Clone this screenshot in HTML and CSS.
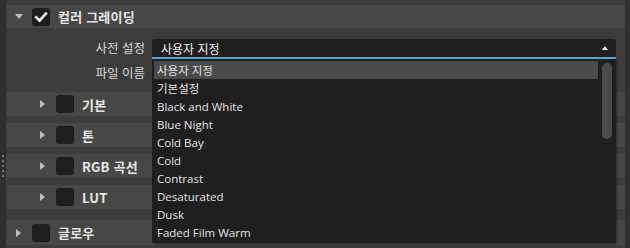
FILE: index.html
```html
<!DOCTYPE html>
<html lang="ko">
<head>
<meta charset="utf-8">
<link rel="stylesheet" href="styles.css">
</head>
<body>
<div class="app">
  <div class="gutter left">
    <div class="grip"><i></i><i></i><i></i><i></i><i></i></div>
  </div>
  <div class="panel">
    <div class="row header">
      <span class="tri down"></span>
      <span class="cb"><svg viewBox="0 0 18 18" width="18" height="18"><path d="M4.2 9.3 L7.6 12.6 L13.9 5.6" fill="none" stroke="#f2f2f2" stroke-width="2.6" stroke-linecap="square"/></svg></span>
      <span class="title">컬러 그레이딩</span>
    </div>
    <div class="presets">
      <div class="field">
        <span class="label">사전 설정</span>
        <div class="select">
          <div class="select-box"><span>사용자 지정</span><span class="up"></span></div>
          <div class="menu">
            <div class="list">
              <div class="item active">사용자 지정</div>
              <div class="item">기본설정</div>
              <div class="item">Black and White</div>
              <div class="item">Blue Night</div>
              <div class="item">Cold Bay</div>
              <div class="item">Cold</div>
              <div class="item">Contrast</div>
              <div class="item">Desaturated</div>
              <div class="item">Dusk</div>
              <div class="item">Faded Film Warm</div>
            </div>
            <div class="track"><div class="thumb"></div></div>
          </div>
        </div>
      </div>
      <div class="field second">
        <span class="label">파일 이름</span>
        <div class="input"></div>
      </div>
    </div>
    <div class="subs">
      <div class="row sub"><span class="tri right"></span><span class="cb"></span><span class="title">기본</span></div>
      <div class="row sub"><span class="tri right"></span><span class="cb"></span><span class="title">톤</span></div>
      <div class="row sub"><span class="tri right"></span><span class="cb"></span><span class="title">RGB 곡선</span></div>
      <div class="row sub"><span class="tri right"></span><span class="cb"></span><span class="title">LUT</span></div>
    </div>
    <div class="row glow"><span class="tri right"></span><span class="cb"></span><span class="title">글로우</span></div>
  </div>
  <div class="gutter rightg"></div>
</div>
</body>
</html>
```

FILE: styles.css
```css
html, body {
  margin: 0;
  padding: 0;
  background: #3c3c3c;
  width: 630px;
  height: 248px;
  overflow: hidden;
  font-family: "Open Sans", "Noto Sans CJK KR", sans-serif;
  font-size: 12px;
  color: #d6d6d6;
}

.app {
  display: flex;
  width: 630px;
  height: 248px;
}

.gutter {
  background: #2f2f2f;
  flex: none;
}

.gutter.left {
  width: 6px;
  display: flex;
  flex-direction: column;
  padding-top: 155px;
  box-sizing: border-box;
}

.grip {
  display: flex;
  flex-direction: column;
  gap: 3px;
  padding-left: 2px;
}

.grip i {
  display: block;
  width: 2px;
  height: 2px;
  background: #7a7a7a;
}

.gutter.rightg {
  width: 5px;
}

.panel {
  flex: 1;
  background: #3c3c3c;
  padding-top: 5px;
  display: flex;
  flex-direction: column;
}

.row {
  display: flex;
  align-items: center;
  background: #474747;
  height: 24px;
}

.header {
  height: 23px;
  padding-left: 9px;
}

.tri {
  flex: none;
  width: 0;
  height: 0;
}

.tri.down {
  border-left: 4px solid transparent;
  border-right: 4px solid transparent;
  border-top: 5px solid #bdbdbd;
  margin-right: 9px;
}

.tri.right {
  border-top: 4px solid transparent;
  border-bottom: 4px solid transparent;
  border-left: 5px solid #bdbdbd;
  margin-right: 11px;
}

.cb {
  flex: none;
  width: 18px;
  height: 18px;
  border-radius: 3px;
  background: #1e1e1e;
  margin-right: 8px;
  display: flex;
}

.title {
  font-family: "Noto Sans CJK KR", sans-serif;
  font-weight: 700;
  font-size: 13px;
  color: #e6e6e6;
  letter-spacing: 0.2px;
}

.presets {
  height: 64px;
  padding-top: 11px;
  box-sizing: border-box;
  display: flex;
  flex-direction: column;
  gap: 5px;
  padding-right: 9px;
}

.field {
  display: flex;
  align-items: flex-start;
  gap: 7px;
}

.label {
  width: 139px;
  flex: none;
  text-align: right;
  font-family: "Noto Sans CJK KR", sans-serif;
  font-size: 12.5px;
  line-height: 18px;
  color: #d8d8d8;
}

.select {
  flex: 1;
  position: relative;
}

.select-box {
  height: 18px;
  background: #1f1f1f;
  border-radius: 3px 3px 0 0;
  border-bottom: 2px solid #5ba6d8;
  display: flex;
  align-items: center;
  justify-content: space-between;
  padding-left: 9px;
  padding-right: 8px;
  font-family: "Noto Sans CJK KR", sans-serif;
  font-size: 12px;
  color: #f0f0f0;
}

.up {
  width: 0;
  height: 0;
  border-left: 3.5px solid transparent;
  border-right: 3.5px solid transparent;
  border-bottom: 4px solid #e8e8e8;
  margin-top: -1px;
}

.menu {
  position: absolute;
  left: 0;
  right: 0;
  top: 20px;
  height: 184px;
  background: #1f1f1f;
  border-radius: 0 0 2px 2px;
  box-shadow: 1px 1px 2px rgba(0,0,0,0.35);
  display: flex;
  padding: 2px 0 2px 2px;
  box-sizing: border-box;
  z-index: 5;
}

.list {
  flex: 1;
  display: flex;
  flex-direction: column;
}

.item {
  height: 18px;
  box-sizing: border-box;
  padding-top: 1px;
  line-height: 17px;
  padding-left: 3px;
  color: #e4e4e4;
  font-family: "Open Sans", "Noto Sans CJK KR", sans-serif;
  font-size: 11.5px;
  white-space: nowrap;
}

.item.active {
  background: #4b4b4b;
}

.track {
  width: 18px;
  flex: none;
  display: flex;
  justify-content: center;
  padding-top: 2px;
}

.thumb {
  width: 10px;
  height: 76px;
  border-radius: 5px;
  background: #4b4b4b;
}

.input {
  flex: 1;
  height: 18px;
  background: #1f1f1f;
}

.subs {
  display: flex;
  flex-direction: column;
  gap: 7px;
}

.sub {
  padding-left: 34px;
}

.glow {
  margin-top: 11px;
  height: 25px;
  padding-left: 10px;
}
```
